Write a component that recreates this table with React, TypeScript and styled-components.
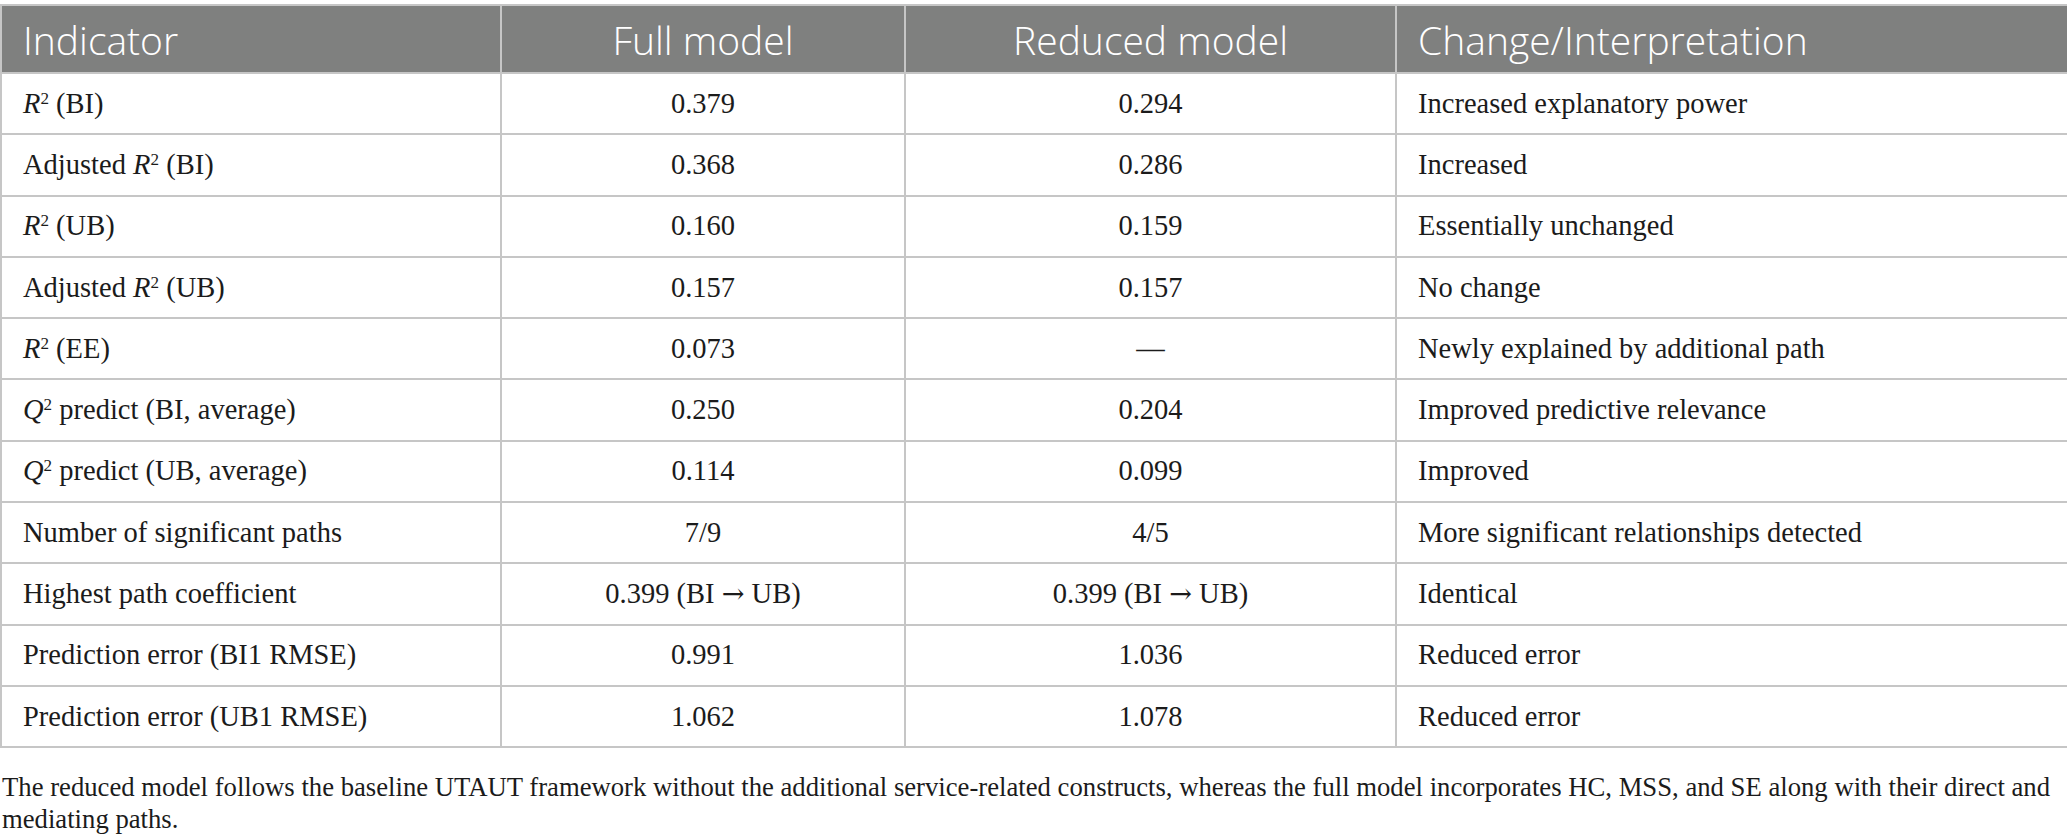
import React from "react";
import styled, { createGlobalStyle } from "styled-components";

const GlobalStyle = createGlobalStyle`
  html, body {
    margin: 0;
    padding: 0;
    background: #ffffff;
  }
  body {
    font-family: "Liberation Serif", "Times New Roman", serif;
    color: #1b1b1b;
  }
`;

const Page = styled.div`
  padding-top: 4px;
  width: 2067px;
`;

const Table = styled.table`
  width: 2067px;
  border-collapse: collapse;
  table-layout: fixed;
  border: 2px solid #c6c6c6;
`;

type Align = "left" | "center";

const HeadCell = styled.th<{ $align: Align }>`
  height: 66px;
  padding: 0 21px;
  background: #7f807f;
  color: #ffffff;
  font-family: "Open Sans", "Noto Sans", sans-serif;
  font-weight: 300;
  font-size: 39px;
  text-align: ${(p) => p.$align};
  border: 2px solid #c6c6c6;
  white-space: nowrap;
`;

const Cell = styled.td<{ $align: Align }>`
  height: 59.3px;
  padding: 0 21px;
  font-size: 28.5px;
  text-align: ${(p) => p.$align};
  border: 2px solid #c6c6c6;
  white-space: nowrap;
`;

const Sym = styled.i`
  font-style: italic;
`;

const Sup = styled.sup`
  font-size: 0.6em;
  vertical-align: 0.55em;
  line-height: 0;
`;

const Arrow = styled.span`
  font-family: "DejaVu Serif", serif;
  font-size: 0.95em;
`;

const Note = styled.p`
  margin: 23px 0 0;
  padding: 0 2px;
  font-size: 26.7px;
  line-height: 32px;
`;

const Stat = ({ s, rest, pre }: { s: string; rest: string; pre?: string }) => (
  <>
    {pre ? `${pre} ` : ""}
    <Sym>{s}</Sym>
    <Sup>2</Sup> {rest}
  </>
);

const Path = ({ v }: { v: string }) => (
  <>
    {v} (BI <Arrow>→</Arrow> UB)
  </>
);

type Row = { label: React.ReactNode; full: React.ReactNode; reduced: React.ReactNode; change: string };

const rows: Row[] = [
  { label: <Stat s="R" rest="(BI)" />, full: "0.379", reduced: "0.294", change: "Increased explanatory power" },
  { label: <Stat pre="Adjusted" s="R" rest="(BI)" />, full: "0.368", reduced: "0.286", change: "Increased" },
  { label: <Stat s="R" rest="(UB)" />, full: "0.160", reduced: "0.159", change: "Essentially unchanged" },
  { label: <Stat pre="Adjusted" s="R" rest="(UB)" />, full: "0.157", reduced: "0.157", change: "No change" },
  { label: <Stat s="R" rest="(EE)" />, full: "0.073", reduced: "—", change: "Newly explained by additional path" },
  { label: <Stat s="Q" rest="predict (BI, average)" />, full: "0.250", reduced: "0.204", change: "Improved predictive relevance" },
  { label: <Stat s="Q" rest="predict (UB, average)" />, full: "0.114", reduced: "0.099", change: "Improved" },
  { label: "Number of significant paths", full: "7/9", reduced: "4/5", change: "More significant relationships detected" },
  { label: "Highest path coefficient", full: <Path v="0.399" />, reduced: <Path v="0.399" />, change: "Identical" },
  { label: "Prediction error (BI1 RMSE)", full: "0.991", reduced: "1.036", change: "Reduced error" },
  { label: "Prediction error (UB1 RMSE)", full: "1.062", reduced: "1.078", change: "Reduced error" },
];

export default function App() {
  return (
    <Page>
      <GlobalStyle />
      <Table>
        <colgroup>
          <col style={{ width: 500 }} />
          <col style={{ width: 404 }} />
          <col style={{ width: 491 }} />
          <col style={{ width: 672 }} />
        </colgroup>
        <thead>
          <tr>
            <HeadCell $align="left">Indicator</HeadCell>
            <HeadCell $align="center">Full model</HeadCell>
            <HeadCell $align="center">Reduced model</HeadCell>
            <HeadCell $align="left">Change/Interpretation</HeadCell>
          </tr>
        </thead>
        <tbody>
          {rows.map((r, i) => (
            <tr key={i}>
              <Cell $align="left">{r.label}</Cell>
              <Cell $align="center">{r.full}</Cell>
              <Cell $align="center">{r.reduced}</Cell>
              <Cell $align="left">{r.change}</Cell>
            </tr>
          ))}
        </tbody>
      </Table>
      <Note>
        The reduced model follows the baseline UTAUT framework without the additional service-related constructs,
        whereas the full model incorporates HC, MSS, and SE along with their direct and mediating paths.
      </Note>
    </Page>
  );
}
